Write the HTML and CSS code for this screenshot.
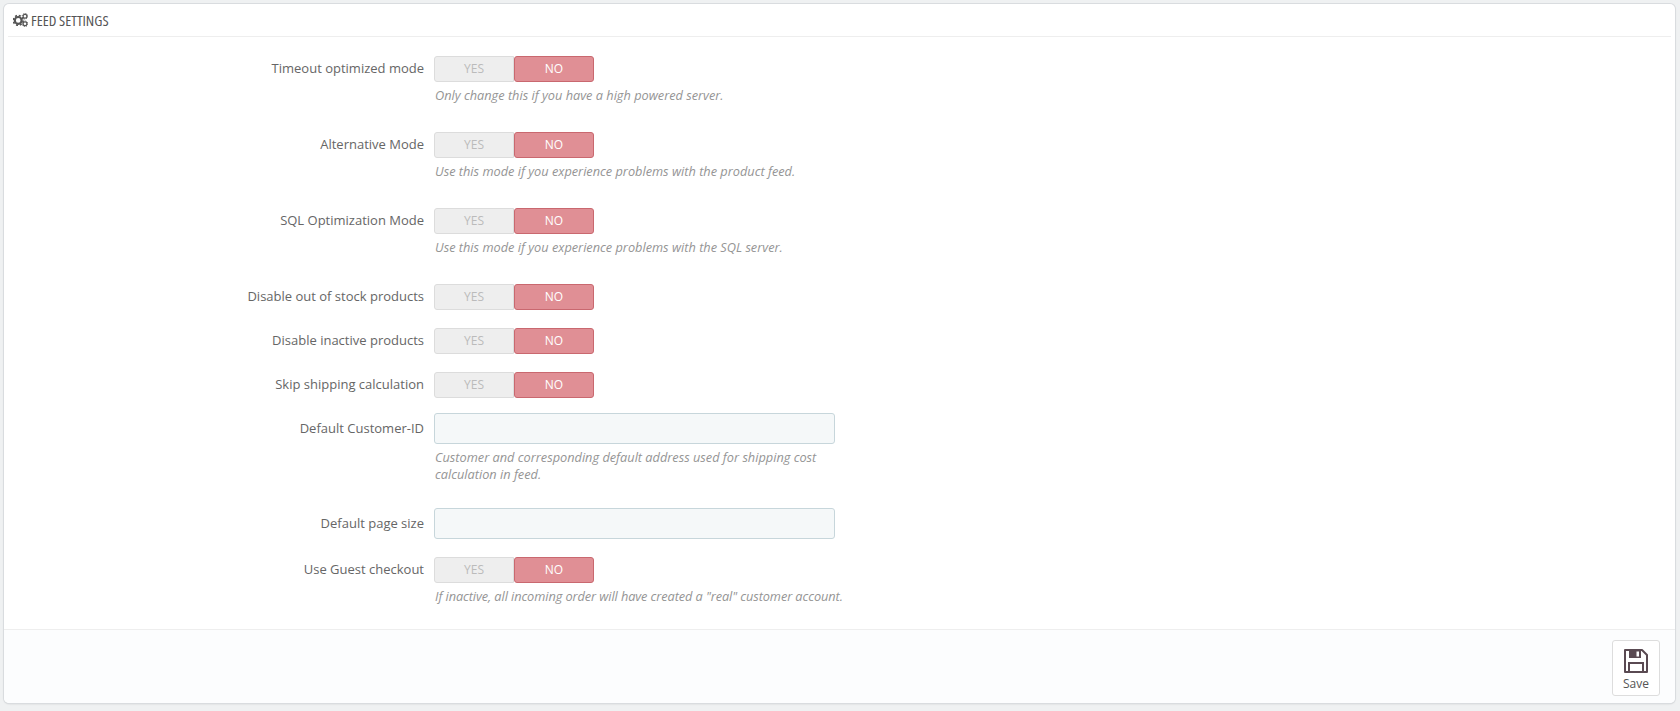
FILE: index.html
```html
<!DOCTYPE html>
<html lang="en">
<head>
    <meta charset="UTF-8">
    <meta name="viewport" content="width=device-width, initial-scale=1.0">
    <title>Feed Settings</title>
    <link rel="stylesheet" href="styles.css">
</head>
<body>
    <div class="panel">
        <div class="panel-heading">
            <svg class="cogs-icon" width="15" height="14" viewBox="0 0 15 14">
                <circle cx="5.2" cy="7.4" r="3.4" fill="none" stroke="#555" stroke-width="2.2"/>
                <circle cx="5.2" cy="7.4" r="4.9" fill="none" stroke="#555" stroke-width="1.6" stroke-dasharray="2 1.85"/>
                <circle cx="12" cy="3.2" r="1.9" fill="none" stroke="#555" stroke-width="1.2"/>
                <circle cx="12" cy="3.2" r="2.8" fill="none" stroke="#555" stroke-width="0.9" stroke-dasharray="1.2 1"/>
                <circle cx="12" cy="10.8" r="1.9" fill="none" stroke="#555" stroke-width="1.2"/>
                <circle cx="12" cy="10.8" r="2.8" fill="none" stroke="#555" stroke-width="0.9" stroke-dasharray="1.2 1"/>
            </svg>
            <span class="panel-title">FEED SETTINGS</span>
        </div>
        <div class="form-wrapper">
            <div class="form-group">
                <label>Timeout optimized mode</label>
                <div class="field">
                    <div class="switch"><span class="switch-yes">YES</span><span class="switch-no">NO</span></div>
                    <p class="help-block">Only change this if you have a high powered server.</p>
                </div>
            </div>
            <div class="form-group">
                <label>Alternative Mode</label>
                <div class="field">
                    <div class="switch"><span class="switch-yes">YES</span><span class="switch-no">NO</span></div>
                    <p class="help-block">Use this mode if you experience problems with the product feed.</p>
                </div>
            </div>
            <div class="form-group">
                <label>SQL Optimization Mode</label>
                <div class="field">
                    <div class="switch"><span class="switch-yes">YES</span><span class="switch-no">NO</span></div>
                    <p class="help-block">Use this mode if you experience problems with the SQL server.</p>
                </div>
            </div>
            <div class="form-group">
                <label>Disable out of stock products</label>
                <div class="field">
                    <div class="switch"><span class="switch-yes">YES</span><span class="switch-no">NO</span></div>
                </div>
            </div>
            <div class="form-group">
                <label>Disable inactive products</label>
                <div class="field">
                    <div class="switch"><span class="switch-yes">YES</span><span class="switch-no">NO</span></div>
                </div>
            </div>
            <div class="form-group">
                <label>Skip shipping calculation</label>
                <div class="field">
                    <div class="switch"><span class="switch-yes">YES</span><span class="switch-no">NO</span></div>
                </div>
            </div>
            <div class="form-group form-group-input">
                <label for="customer_id">Default Customer-ID</label>
                <div class="field">
                    <input type="text" id="customer_id">
                    <p class="help-block">Customer and corresponding default address used for shipping cost calculation in feed.</p>
                </div>
            </div>
            <div class="form-group form-group-input">
                <label for="page_size">Default page size</label>
                <div class="field">
                    <input type="text" id="page_size">
                </div>
            </div>
            <div class="form-group">
                <label>Use Guest checkout</label>
                <div class="field">
                    <div class="switch"><span class="switch-yes">YES</span><span class="switch-no">NO</span></div>
                    <p class="help-block help-nowrap">If inactive, all incoming order will have created a "real" customer account.</p>
                </div>
            </div>
        </div>
        <div class="panel-footer">
            <button class="save-btn" type="button">
                <svg width="24" height="24" viewBox="0 0 24 24">
                    <path d="M1 1H18L23 6V23H1Z" fill="none" stroke="#5a4a52" stroke-width="2" stroke-linejoin="round"/>
                    <path d="M5 1H17V9H5Z" fill="#5a4a52"/>
                    <rect x="12.5" y="2.5" width="2.5" height="5" fill="#fff"/>
                    <path d="M5 22V14H19V22" fill="none" stroke="#5a4a52" stroke-width="2"/>
                </svg>
                <span>Save</span>
            </button>
        </div>
    </div>
</body>
</html>
```

FILE: styles.css
```css
html, body {
    height: 100%;
}
body {
    margin: 0;
    padding: 4px 5px 8px 4px;
    box-sizing: border-box;
    background-color: #eff1f2;
    font-family: "Open Sans", Arial, sans-serif;
    font-size: 12px;
    color: #555;
}
.panel {
    background-color: #fff;
    border-radius: 5px;
    box-shadow: 0 0 0 1px #d9dcdf, 0 1px 2px rgba(0, 0, 0, 0.15);
    height: 699px;
    display: flex;
    flex-direction: column;
}
.panel-heading {
    flex-shrink: 0;
    margin: 0 4px;
    height: 32px;
    border-bottom: 1px solid #eee;
    display: flex;
    align-items: center;
    gap: 3px;
    padding-left: 5px;
    font-size: 15px;
    color: #555;
}
.panel-title {
    font-family: "Open Sans", Arial, sans-serif;
    font-stretch: 75%;
}
.form-wrapper {
    padding-top: 19px;
    flex: 1;
    min-height: 0;
}
.form-group {
    display: flex;
    gap: 10px;
    margin-bottom: 18px;
}
.form-group-input {
    margin-top: -3px;
}
label {
    width: 420px;
    text-align: right;
    line-height: 25px;
    font-size: 13px;
    color: #666;
}
.form-group-input label {
    line-height: 31px;
}
.field {
    width: 401px;
}
.switch {
    display: flex;
    width: 160px;
    height: 26px;
    line-height: 23px;
    text-align: center;
}
.switch-yes, .switch-no {
    box-sizing: border-box;
    width: 80px;
}
.switch-yes {
    background-color: #eee;
    border: 1px solid #dcdcdc;
    border-radius: 3px 0 0 3px;
    color: #bbb;
}
.switch-no {
    background-color: #e08f95;
    border: 1px solid #c9686f;
    border-radius: 3px;
    color: #fff;
}
input {
    display: block;
    width: 100%;
    height: 31px;
    box-sizing: border-box;
    background-color: #f5f8f9;
    border: 1px solid #c7d6db;
    border-radius: 3px;
}
.help-block {
    margin: 5px 0 0;
    padding: 0 0 10px 1px;
    font-size: 12.75px;
    font-style: italic;
    line-height: 17px;
    color: #959595;
}
.help-nowrap {
    white-space: nowrap;
    letter-spacing: -0.08px;
}
.panel-footer {
    flex-shrink: 0;
    height: 74px;
    box-sizing: border-box;
    border-top: 1px solid #eee;
    background-color: #fcfdfe;
    border-radius: 0 0 5px 5px;
    display: flex;
    justify-content: flex-end;
    padding: 10px 15px 0 0;
}
.save-btn {
    width: 48px;
    height: 56px;
    background-color: #fff;
    border: 1px solid #ddd;
    border-radius: 3px;
    padding: 8px 0 0;
    display: flex;
    flex-direction: column;
    align-items: center;
    gap: 2px;
    font-family: "Open Sans", Arial, sans-serif;
    font-size: 12px;
    color: #555;
}
```
